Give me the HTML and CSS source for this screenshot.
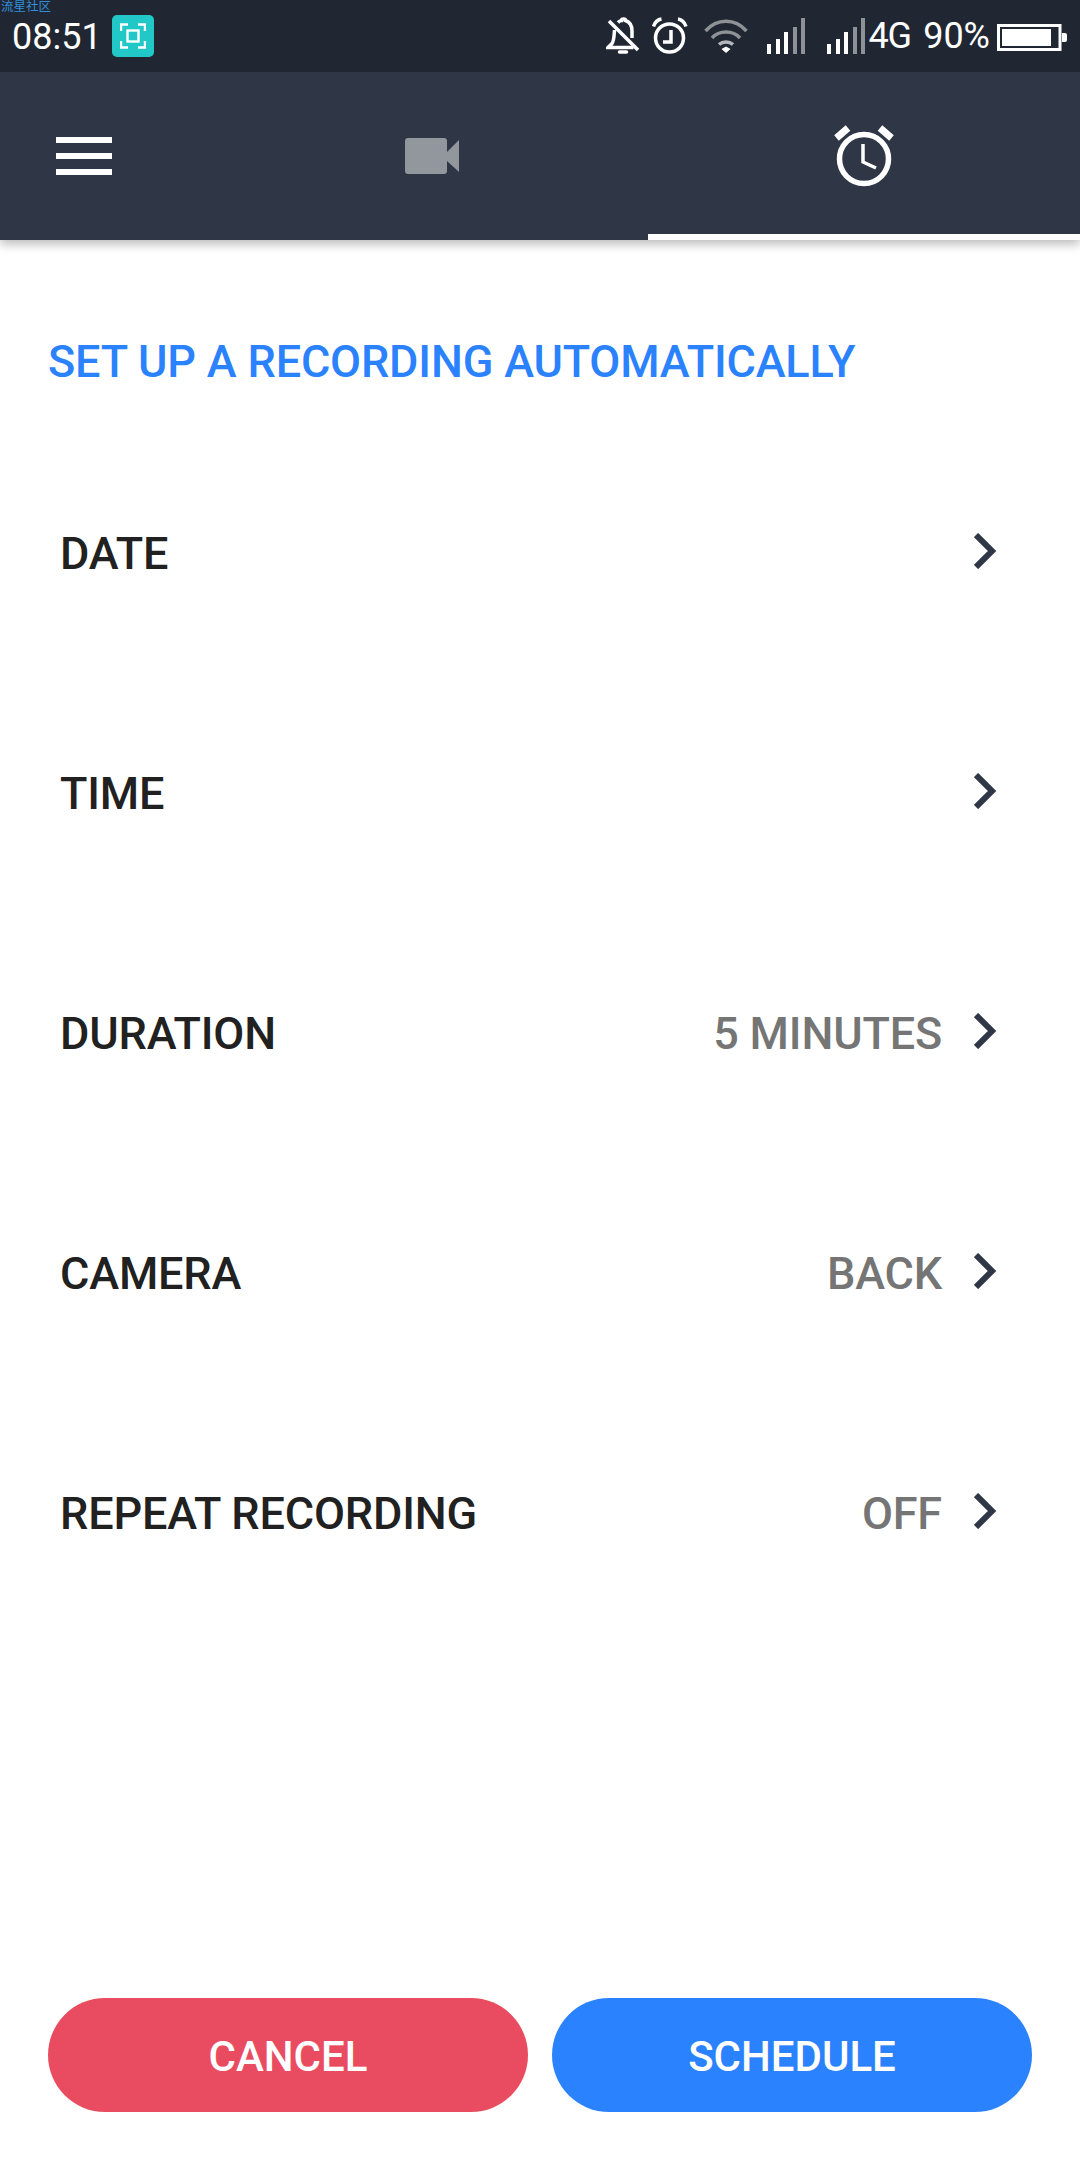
FILE: index.html
```html
<!DOCTYPE html>
<html lang="en">
<head>
<meta charset="utf-8">
<title>Schedule recording</title>
<link rel="stylesheet" href="styles.css">
</head>
<body>
<div class="app">
  <header class="status">
    <span class="watermark">流星社区</span>
    <div class="status-left">
      <span class="clock">08:51</span>
      <span class="shot">
        <svg width="26" height="26" viewBox="0 0 26 26" fill="none" stroke="#fff" stroke-width="2.4">
          <path d="M1 8V1.500H8M18 1.500H25V8M25 18V24.500H18M8 24.500H1V18"/>
          <rect x="7.500" y="7.500" width="11" height="11"/>
        </svg>
      </span>
    </div>
    <div class="status-right">
      <svg class="i-bell" width="34" height="38" viewBox="0 0 34 38" fill="none" stroke="#fff" stroke-width="3.500">
        <path d="M8.500 13C8 20 8 24 6 26.500L2 30.500H27.500M12 5.500C14 3.500 15.500 3.500 15.500 3.500C15.500 1.500 19.500 1.500 19.500 3.500C24 5 26 9 26 14V21"/>
        <path d="M3 4L32 33"/>
        <path d="M13.500 35H20.500" stroke-width="3.500" stroke-linecap="round"/>
      </svg>
      <svg class="i-alarm" width="36" height="38" viewBox="0 0 36 38" fill="none" stroke="#fff" stroke-width="3.500">
        <circle cx="17.500" cy="21" r="14"/>
        <path d="M19 13V25H11"/>
        <path d="M1.500 9.500C3 5 6 2.500 9.500 2M34 9.500C32.500 5 29.500 2.500 26 2"/>
      </svg>
      <svg class="i-wifi" width="46" height="34" viewBox="0 0 46 34" fill="none" stroke="#8e9196" stroke-width="3.500">
        <path d="M1.500 12C13 -1 31 -1 42.500 12"/>
        <path d="M8 19C15 11 29 11 36 19"/>
        <path d="M15 25.500C19 22 25 22 29 25.500" stroke="#b4b6ba"/>
        <path d="M17.500 30L22 34L26.500 30L22 27.500Z" fill="#fff" stroke="none"/>
      </svg>
      <svg class="i-signal" width="40" height="36" viewBox="0 0 40 36">
        <rect x="0" y="26" width="4" height="10" fill="#fff"/>
        <rect x="9" y="21" width="4" height="15" fill="#fff"/>
        <rect x="17" y="14" width="4" height="22" fill="#fff"/>
        <rect x="26" y="9" width="4" height="27" fill="#8e9196"/>
        <rect x="34" y="0" width="4" height="36" fill="#8e9196"/>
      </svg>
      <svg class="i-signal2" width="40" height="36" viewBox="0 0 40 36">
        <rect x="0" y="26" width="4" height="10" fill="#fff"/>
        <rect x="9" y="21" width="4" height="15" fill="#fff"/>
        <rect x="17" y="14" width="4" height="22" fill="#fff"/>
        <rect x="26" y="9" width="4" height="27" fill="#8e9196"/>
        <rect x="34" y="0" width="4" height="36" fill="#8e9196"/>
      </svg>
      <span class="net">4G</span>
      <span class="pct">90%</span>
      <svg class="i-batt" width="70" height="27" viewBox="0 0 70 27">
        <rect x="1.500" y="1.500" width="61.500" height="24" fill="none" stroke="#fff" stroke-width="3"/>
        <rect x="5" y="5" width="49" height="17" fill="#fff"/>
        <path d="M65 9H68Q70 9 70 11V16Q70 18 68 18H65Z" fill="#fff"/>
      </svg>
    </div>
  </header>

  <nav class="tabs">
    <button class="tab-menu" aria-label="Menu">
      <span class="bar"></span><span class="bar"></span><span class="bar"></span>
    </button>
    <div class="tab">
      <svg width="54" height="36" viewBox="0 0 54 36" fill="#92969d">
        <path d="M3 0H39Q42 0 42 3V33Q42 36 39 36H3Q0 36 0 33V3Q0 0 3 0Z"/>
        <path d="M42 14L54 2V34L42 23Z"/>
      </svg>
    </div>
    <div class="tab tab-active">
      <svg width="62" height="62" viewBox="0 0 62 62" fill="none" stroke="#fff">
        <circle cx="31" cy="34" r="24.500" stroke-width="5.500"/>
        <path d="M30 19V37L43 43" stroke-width="3.500"/>
        <path d="M3.500 13L15 3M58.500 13L47 3" stroke-width="7"/>
      </svg>
    </div>
  </nav>

  <main class="content">
    <h1 class="title">SET UP A RECORDING AUTOMATICALLY</h1>
    <ul class="rows">
      <li class="row"><span class="label">DATE</span><span class="value"></span><svg class="chev" width="22" height="36" viewBox="0 0 22 36" fill="none" stroke="#2f3747" stroke-width="6"><path d="M2 2L18 18L2 34"/></svg></li>
      <li class="row"><span class="label">TIME</span><span class="value"></span><svg class="chev" width="22" height="36" viewBox="0 0 22 36" fill="none" stroke="#2f3747" stroke-width="6"><path d="M2 2L18 18L2 34"/></svg></li>
      <li class="row"><span class="label">DURATION</span><span class="value">5 MINUTES</span><svg class="chev" width="22" height="36" viewBox="0 0 22 36" fill="none" stroke="#2f3747" stroke-width="6"><path d="M2 2L18 18L2 34"/></svg></li>
      <li class="row"><span class="label">CAMERA</span><span class="value">BACK</span><svg class="chev" width="22" height="36" viewBox="0 0 22 36" fill="none" stroke="#2f3747" stroke-width="6"><path d="M2 2L18 18L2 34"/></svg></li>
      <li class="row"><span class="label">REPEAT RECORDING</span><span class="value">OFF</span><svg class="chev" width="22" height="36" viewBox="0 0 22 36" fill="none" stroke="#2f3747" stroke-width="6"><path d="M2 2L18 18L2 34"/></svg></li>
    </ul>
  </main>

  <footer class="actions">
    <button class="btn btn-cancel">CANCEL</button>
    <button class="btn btn-schedule">SCHEDULE</button>
  </footer>
</div>
</body>
</html>
```
FILE: styles.css
```css
* { box-sizing: border-box; }
html, body { margin: 0; padding: 0; }
body { background: #fff; font-family: Roboto, "Noto Sans CJK SC", sans-serif; }

.app { width: 1080px; height: 2160px; display: flex; flex-direction: column; overflow: hidden; }

/* Status bar */
.status { position: relative; height: 72px; flex: none; background: #212732; display: flex; align-items: center; justify-content: space-between; color: #fff; padding: 0 13px 0 12px; }
.watermark { position: absolute; left: 1px; top: 0; font-size: 12.500px; line-height: 13px; color: #2f8fdc; }
.status-left { display: flex; align-items: center; gap: 10px; margin-top: 2px; }
.clock { font-size: 36px; font-weight: 400; line-height: 40px; }
.shot { width: 42px; height: 42px; border-radius: 5px; background: #22c8c8; display: flex; align-items: center; justify-content: center; margin-top: -2px; }
.shot svg { display: block; }
.status-right { display: flex; align-items: center; }
.status-right svg { display: block; flex: none; }
.i-bell { margin-right: 12px; }
.i-alarm { margin-right: 16px; }
.i-wifi { margin-right: 17px; }
.i-signal { margin-right: 20px; }
.net { font-size: 36px; line-height: 40px; letter-spacing: -1px; margin-left: 1px; }
.pct { font-size: 36px; line-height: 40px; margin-left: 12px; }
.status-right .i-batt { margin: 3px 0 0 7px; }

/* Tab bar */
.tabs { height: 168px; flex: none; background: #2f3747; display: grid; grid-template-columns: 216px 432px 432px; box-shadow: 0 4px 10px rgba(0,0,0,.28); }
.tab-menu { background: none; border: 0; padding: 0 0 0 56px; display: flex; flex-direction: column; align-items: flex-start; justify-content: center; gap: 10px; }
.bar { width: 56px; height: 6px; background: #fff; display: block; }
.tab { display: flex; align-items: center; justify-content: center; border-top: 6px solid transparent; border-bottom: 6px solid transparent; }
.tab-active { border-bottom-color: #fff; }

/* Settings list */
.content { flex: 1; min-height: 0; }
.title { margin: 0; padding: 97px 48px 0; font-size: 45px; font-weight: 500; letter-spacing: -.17px; line-height: 50px; color: #2b82ff; }
.rows { list-style: none; margin: 0; padding: 45px 84px 0 60px; }
.row { height: 240px; display: flex; align-items: center; }
.label { font-size: 45px; font-weight: 500; letter-spacing: -.17px; color: #212121; padding-top: 2px; }
.value { margin-left: auto; font-size: 45px; font-weight: 500; letter-spacing: -.17px; color: #757575; padding-top: 2px; }
.chev { flex: none; margin: -2px 0 0 32px; }

/* Footer buttons */
.actions { flex: none; display: flex; gap: 24px; padding: 0 48px 48px; }
.btn { flex: 1; height: 114px; border: 0; border-radius: 57px; padding: 2px 0 0; color: #fff; font: 500 42px Roboto, sans-serif; }
.btn-cancel { background: #e94c60; }
.btn-schedule { background: #2b82ff; }
```
